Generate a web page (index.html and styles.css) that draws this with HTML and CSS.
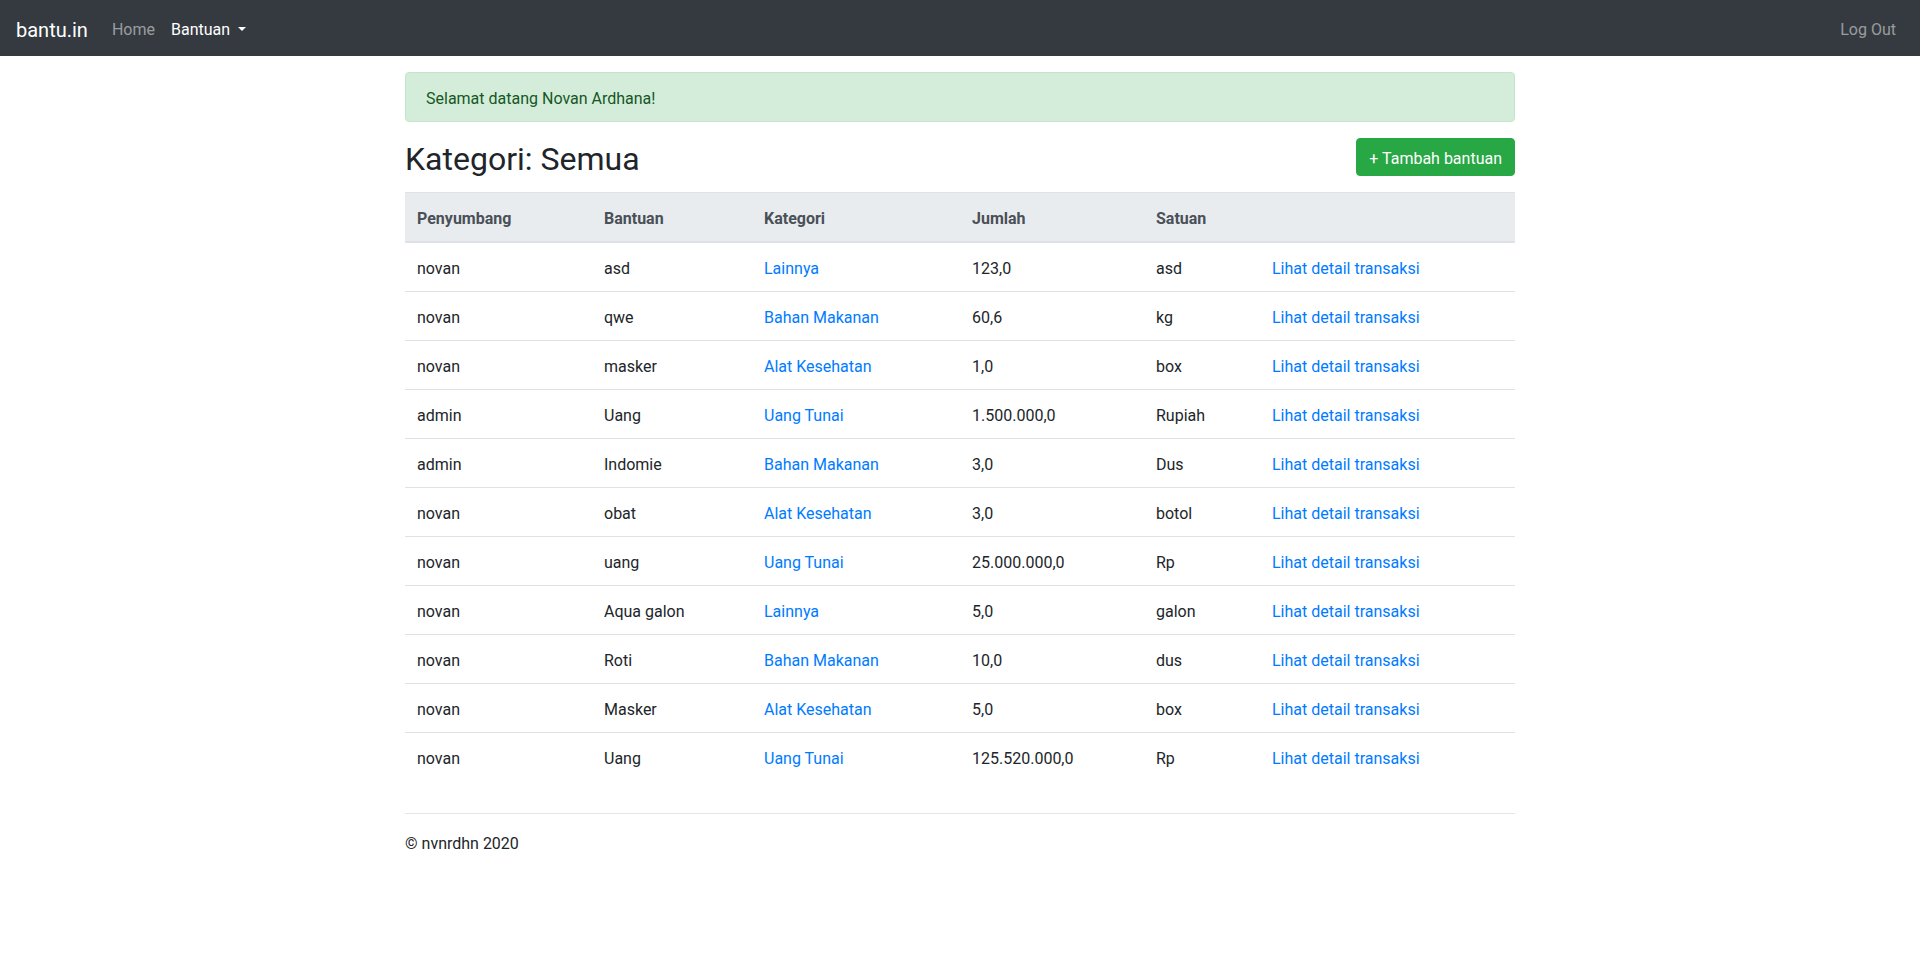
FILE: index.html
```html
<!DOCTYPE html>
<html lang="id">
<head>
<meta charset="utf-8">
<title>bantu.in</title>
<link rel="stylesheet" href="styles.css">
</head>
<body>
<nav class="navbar">
  <a class="brand" href="#">bantu.in</a>
  <ul class="nav-links">
    <li><a class="nav-link" href="#">Home</a></li>
    <li><a class="nav-link active" href="#">Bantuan<span class="caret"></span></a></li>
  </ul>
  <a class="nav-link logout" href="#">Log Out</a>
</nav>

<main class="container">
  <div class="alert">Selamat datang Novan Ardhana!</div>
  <div class="head-row">
    <h2 class="title">Kategori: Semua</h2>
    <a class="btn-success" href="#">+ Tambah bantuan</a>
  </div>
  <table class="table">
    <thead>
      <tr>
        <th class="c1">Penyumbang</th>
        <th class="c2">Bantuan</th>
        <th class="c3">Kategori</th>
        <th class="c4">Jumlah</th>
        <th class="c5">Satuan</th>
        <th class="c6"></th>
      </tr>
    </thead>
    <tbody>
      <tr><td>novan</td><td>asd</td><td><a href="#">Lainnya</a></td><td>123,0</td><td>asd</td><td><a href="#">Lihat detail transaksi</a></td></tr>
      <tr><td>novan</td><td>qwe</td><td><a href="#">Bahan Makanan</a></td><td>60,6</td><td>kg</td><td><a href="#">Lihat detail transaksi</a></td></tr>
      <tr><td>novan</td><td>masker</td><td><a href="#">Alat Kesehatan</a></td><td>1,0</td><td>box</td><td><a href="#">Lihat detail transaksi</a></td></tr>
      <tr><td>admin</td><td>Uang</td><td><a href="#">Uang Tunai</a></td><td>1.500.000,0</td><td>Rupiah</td><td><a href="#">Lihat detail transaksi</a></td></tr>
      <tr><td>admin</td><td>Indomie</td><td><a href="#">Bahan Makanan</a></td><td>3,0</td><td>Dus</td><td><a href="#">Lihat detail transaksi</a></td></tr>
      <tr><td>novan</td><td>obat</td><td><a href="#">Alat Kesehatan</a></td><td>3,0</td><td>botol</td><td><a href="#">Lihat detail transaksi</a></td></tr>
      <tr><td>novan</td><td>uang</td><td><a href="#">Uang Tunai</a></td><td>25.000.000,0</td><td>Rp</td><td><a href="#">Lihat detail transaksi</a></td></tr>
      <tr><td>novan</td><td>Aqua galon</td><td><a href="#">Lainnya</a></td><td>5,0</td><td>galon</td><td><a href="#">Lihat detail transaksi</a></td></tr>
      <tr><td>novan</td><td>Roti</td><td><a href="#">Bahan Makanan</a></td><td>10,0</td><td>dus</td><td><a href="#">Lihat detail transaksi</a></td></tr>
      <tr><td>novan</td><td>Masker</td><td><a href="#">Alat Kesehatan</a></td><td>5,0</td><td>box</td><td><a href="#">Lihat detail transaksi</a></td></tr>
      <tr><td>novan</td><td>Uang</td><td><a href="#">Uang Tunai</a></td><td>125.520.000,0</td><td>Rp</td><td><a href="#">Lihat detail transaksi</a></td></tr>
    </tbody>
  </table>
  <hr class="divider">
  <footer class="footer">© nvnrdhn 2020</footer>
</main>
</body>
</html>
```

FILE: styles.css
```css
* { box-sizing: border-box; }
html, body { margin: 0; padding: 0; }
body {
  font-family: "Segoe UI", Roboto, "Noto Sans", "Liberation Sans", sans-serif;
  font-size: 16px;
  line-height: 1.5;
  color: #212529;
  background: #fff;
}
a { text-decoration: none; color: #007bff; }

.navbar {
  background: #343a40;
  display: flex;
  align-items: center;
  padding: 10px 16px 6px;
  height: 56px;
}
.brand {
  color: #fff;
  font-size: 20px;
  line-height: 30px;
  padding: 5px 0;
  margin-right: 16px;
}
.nav-links {
  list-style: none;
  margin: 0;
  padding: 0;
  display: flex;
  flex: 1;
}
.nav-link {
  display: block;
  padding: 8px;
  color: rgba(255,255,255,.5);
}
.nav-link.active { color: #fff; }
.caret {
  display: inline-block;
  margin-left: 8px;
  vertical-align: 4px;
  border-top: 4.8px solid;
  border-left: 4.8px solid transparent;
  border-right: 4.8px solid transparent;
  border-bottom: 0;
}
.logout { padding-right: 8px; padding-left: 8px; }

.container {
  width: 1140px;
  margin: 16px auto 0;
  padding: 0 15px;
}
.alert {
  padding: 14px 20px 10px;
  margin-bottom: 16px;
  border: 1px solid #c3e6cb;
  border-radius: 4px;
  background: #d4edda;
  color: #155724;
}
.head-row {
  display: flex;
  justify-content: space-between;
  align-items: center;
  margin-bottom: 16px;
}
.title {
  margin: 0;
  padding: 4px 0 0;
  height: 38px;
  font-size: 32px;
  font-weight: 400;
  line-height: 34px;
}
.btn-success {
  display: inline-block;
  background: #28a745;
  border: 1px solid #28a745;
  color: #fff;
  padding: 8px 12px 4px;
  border-radius: 4px;
  line-height: 24px;
}

.table {
  width: 100%;
  border-collapse: collapse;
  margin-bottom: 16px;
}
.table th, .table td {
  padding: 14px 12px 10px;
  text-align: left;
  vertical-align: top;
  border-top: 1px solid #dee2e6;
}
.table thead th {
  background: #e9ecef;
  color: #495057;
  font-weight: 700;
  border-bottom: 2px solid #dee2e6;
  vertical-align: bottom;
}
.c1 { width: 187px; }
.c2 { width: 160px; }
.c3 { width: 208px; }
.c4 { width: 184px; }
.c5 { width: 116px; }
.c6 { width: 255px; }

.divider {
  margin: 32px 0 16px;
  border: 0;
  border-top: 1px solid rgba(0,0,0,.1);
}
.footer { color: #212529; padding-top: 2px; }
```
